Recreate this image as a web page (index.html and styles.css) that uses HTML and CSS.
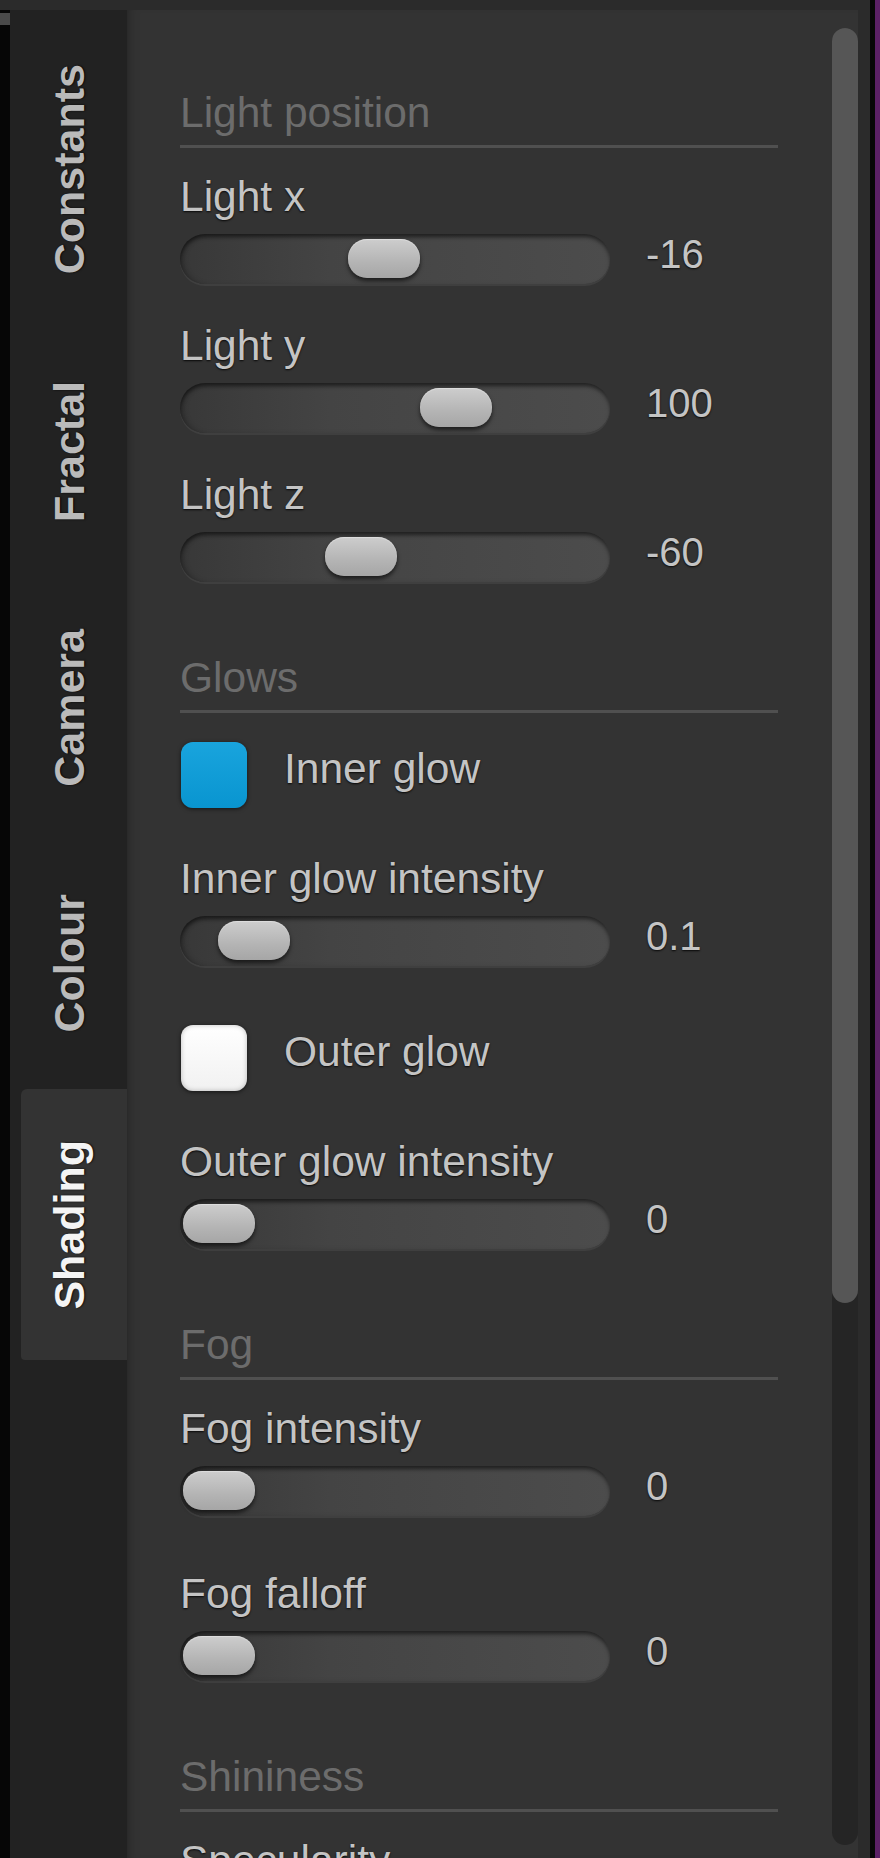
FILE: index.html
```html
<!DOCTYPE html>
<html lang="en">
<head>
<meta charset="utf-8">
<title>Shading</title>
<link rel="stylesheet" href="styles.css">
</head>
<body>
<div class="app">
  <div class="main">
    <div class="edge"><span class="edge-mark"></span></div>
    <nav class="tabs">
      <div class="tab"><span class="tab-text">Constants</span></div>
      <div class="tab"><span class="tab-text">Fractal</span></div>
      <div class="tab"><span class="tab-text">Camera</span></div>
      <div class="tab"><span class="tab-text">Colour</span></div>
      <div class="tab active"><span class="tab-text">Shading</span></div>
    </nav>
    <div class="panel">
      <div class="content">
        <section class="group">
          <h2 class="group-title">Light position</h2>
          <div class="field">
            <div class="field-label">Light x</div>
            <div class="slider-row">
              <div class="track"><span class="thumb" style="left:168px"></span></div>
              <span class="value">-16</span>
            </div>
          </div>
          <div class="field">
            <div class="field-label">Light y</div>
            <div class="slider-row">
              <div class="track"><span class="thumb" style="left:240px"></span></div>
              <span class="value">100</span>
            </div>
          </div>
          <div class="field">
            <div class="field-label">Light z</div>
            <div class="slider-row">
              <div class="track"><span class="thumb" style="left:145px"></span></div>
              <span class="value">-60</span>
            </div>
          </div>
        </section>

        <section class="group">
          <h2 class="group-title">Glows</h2>
          <div class="check-row">
            <span class="swatch swatch-blue"></span>
            <span class="check-label">Inner glow</span>
          </div>
          <div class="field">
            <div class="field-label">Inner glow intensity</div>
            <div class="slider-row">
              <div class="track"><span class="thumb" style="left:38px"></span></div>
              <span class="value">0.1</span>
            </div>
          </div>
          <div class="check-row after-field">
            <span class="swatch swatch-white"></span>
            <span class="check-label">Outer glow</span>
          </div>
          <div class="field">
            <div class="field-label">Outer glow intensity</div>
            <div class="slider-row">
              <div class="track"><span class="thumb" style="left:3px"></span></div>
              <span class="value">0</span>
            </div>
          </div>
        </section>

        <section class="group">
          <h2 class="group-title">Fog</h2>
          <div class="field field-loose">
            <div class="field-label">Fog intensity</div>
            <div class="slider-row">
              <div class="track"><span class="thumb" style="left:3px"></span></div>
              <span class="value">0</span>
            </div>
          </div>
          <div class="field">
            <div class="field-label">Fog falloff</div>
            <div class="slider-row">
              <div class="track"><span class="thumb" style="left:3px"></span></div>
              <span class="value">0</span>
            </div>
          </div>
        </section>

        <section class="group">
          <h2 class="group-title">Shininess</h2>
          <div class="field">
            <div class="field-label">Specularity</div>
          </div>
        </section>
      </div>
      <div class="scrollbar"><div class="scroll-thumb"></div></div>
    </div>
  </div>
  <div class="stripe-black"></div>
  <div class="stripe-purple"></div>
</div>
</body>
</html>
```

FILE: styles.css
```css
* { box-sizing: border-box; }

html, body {
  margin: 0;
  padding: 0;
  width: 880px;
  height: 1858px;
  overflow: hidden;
  background: #2a2a2a;
  font-family: "Liberation Sans", Arial, sans-serif;
}

.app {
  display: flex;
  width: 880px;
  height: 1858px;
}

.main {
  flex: 1;
  display: flex;
  padding-top: 10px;
  padding-right: 12px;
  background: #2b2b2b;
}

.stripe-black { width: 5px; background: #070707; }
.stripe-purple { width: 5px; background: #5c2166; }

.edge {
  width: 10px;
  background: #060606;
  display: flex;
  flex-direction: column;
}

.edge-mark {
  display: block;
  margin-top: 3px;
  height: 12px;
  background: #4a4a4a;
}

/* Tabs */
.tabs {
  width: 117px;
  background: #222222;
  display: flex;
  flex-direction: column;
  gap: 5px;
  padding-top: 3px;
}

.tab {
  margin-left: 11px;
  display: flex;
  align-items: center;
  padding: 51px 0 51px 23px;
}

.tab.active {
  background: #333333;
  border-radius: 6px 0 0 4px;
}

.tab-text {
  writing-mode: vertical-rl;
  transform: rotate(180deg);
  font-size: 43px;
  line-height: 50px;
  font-weight: bold;
  color: #bababa;
  text-shadow: 0 1px 2px rgba(0, 0, 0, 0.9);
  white-space: nowrap;
}

.tab.active .tab-text { color: #f4f4f4; }

/* Panel */
.panel {
  width: 731px;
  background: #333333;
  display: flex;
  box-shadow: inset 10px 0 12px -10px rgba(0, 0, 0, 0.35);
}

.content {
  flex: 1;
  display: flex;
  flex-direction: column;
  padding-top: 78px;
  padding-left: 53px;
  overflow: hidden;
}

.group {
  display: flex;
  flex-direction: column;
}

.group + .group { margin-top: 34px; }

.group-title {
  margin: 0 0 24px 0;
  width: 598px;
  font-size: 42.5px;
  line-height: 50px;
  font-weight: normal;
  color: #6c6c6c;
  padding-bottom: 7px;
  border-bottom: 3px solid #505050;
}

.field {
  display: flex;
  flex-direction: column;
  gap: 12px;
  margin-bottom: 37px;
}

.field-loose { margin-bottom: 53px; }

.field-label,
.check-label {
  font-size: 42.5px;
  line-height: 50px;
  color: #c4c4c4;
  text-shadow: 0 1px 2px rgba(0, 0, 0, 0.85);
  white-space: nowrap;
}

.slider-row {
  display: flex;
  align-items: flex-start;
}

.track {
  position: relative;
  width: 430px;
  height: 50px;
  border-radius: 25px;
  background: linear-gradient(90deg, #383838 0%, #444444 35%, #4c4c4c 100%);
  box-shadow:
    inset 0 4px 4px -1px rgba(0, 0, 0, 0.55),
    inset 5px 0 6px -3px rgba(0, 0, 0, 0.3),
    0 2px 0 rgba(255, 255, 255, 0.06);
}

.thumb {
  position: absolute;
  top: 5px;
  width: 72px;
  height: 39px;
  border-radius: 19px;
  background: linear-gradient(#cdcdcd, #b4b4b4 60%, #a6a6a6);
  box-shadow:
    0 3px 4px rgba(0, 0, 0, 0.6),
    inset 0 1px 1px rgba(255, 255, 255, 0.35);
}

.value {
  margin-left: 36px;
  margin-top: -5px;
  font-size: 40px;
  line-height: 50px;
  color: #c4c4c4;
  text-shadow: 0 1px 2px rgba(0, 0, 0, 0.85);
}

/* Checkbox rows */
.check-row {
  display: flex;
  align-items: flex-start;
  margin-top: 5px;
  margin-bottom: 46px;
}

.check-row.after-field { margin-top: 22px; }

.swatch {
  width: 66px;
  height: 66px;
  margin-left: 1px;
  border-radius: 12px;
  box-shadow: 0 1px 4px rgba(0, 0, 0, 0.6);
}

.swatch-blue {
  background: linear-gradient(#19a4dd, #0995d0);
}

.swatch-white {
  background: linear-gradient(#ffffff, #f1f1f1);
  box-shadow: 0 1px 4px rgba(0, 0, 0, 0.6), inset 0 0 5px rgba(0, 0, 0, 0.25);
}

.check-label {
  margin-left: 37px;
  margin-top: 2px;
}

/* Scrollbar */
.scrollbar {
  width: 26px;
  margin-top: 18px;
  margin-bottom: 13px;
  border-radius: 13px;
  background: #252525;
}

.scroll-thumb {
  height: 1275px;
  border-radius: 13px;
  background: #565656;
}
```
